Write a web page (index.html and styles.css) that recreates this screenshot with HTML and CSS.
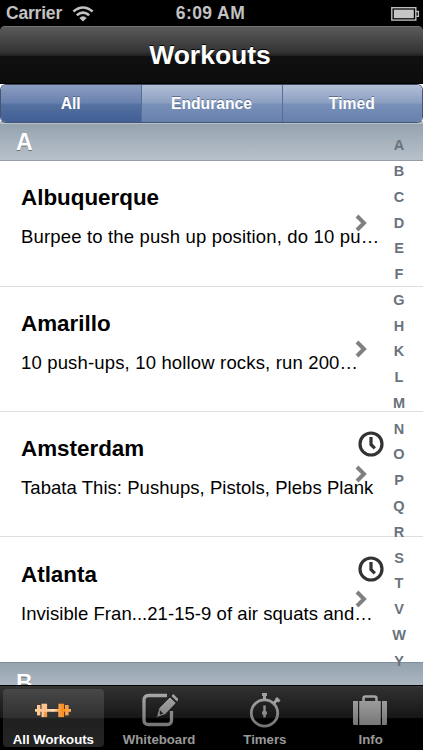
FILE: index.html
```html
<!DOCTYPE html>
<html lang="en">
<head>
<meta charset="utf-8">
<title>Workouts</title>
<link rel="stylesheet" href="styles.css">
</head>
<body>
<div class="phone">
  <header class="status">
    <div class="carrier"><span>Carrier</span>
      <svg class="wifi" width="22" height="16" viewBox="0 0 22 16" fill="none" stroke="#c2c2c2" stroke-width="2.6"><path d="M1.4 5.6Q11-2.6 20.6 5.6M4.8 9.3Q11 3.9 17.2 9.3"/><path d="M7.3 11.9Q11 8.6 14.7 11.9L11 15.6z" fill="#c2c2c2" stroke="none"/></svg>
    </div>
    <div class="clock">6:09 AM</div>
    <svg class="battery" width="29" height="14" viewBox="0 0 29 14"><rect x=".8" y=".7" width="24" height="12.4" fill="none" stroke="#bdbdbd" stroke-width="1.4"/><rect x="2.8" y="2.6" width="20" height="8.6" fill="#c4c4c4"/><path d="M25 4.5h2.4v4.8H25" fill="none" stroke="#bdbdbd" stroke-width="1.3"/></svg>
  </header>
  <h1 class="navbar">Workouts</h1>
  <div class="segments-wrap"><nav class="segments">
    <span class="segment selected">All</span><span class="segment">Endurance</span><span class="segment">Timed</span>
  </nav></div>
  <main class="table">
    <h2 class="section">A</h2>
    <article class="row">
      <h3>Albuquerque</h3><p class="wide">Burpee to the push up position, do 10 pu…</p>
      <svg class="chevron" viewBox="0 0 12 18"><path d="M2 2l7 7-7 7"/></svg>
    </article>
    <article class="row">
      <h3>Amarillo</h3><p class="wide">10 push-ups, 10 hollow rocks, run 200…</p>
      <svg class="chevron" viewBox="0 0 12 18"><path d="M2 2l7 7-7 7"/></svg>
    </article>
    <article class="row">
      <h3>Amsterdam</h3><p>Tabata This: Pushups, Pistols, Plebs Plank</p>
      <svg class="timed" viewBox="0 0 26 26"><circle cx="13" cy="13" r="11"/><path d="M13 6v7.5l3.8 3.8"/></svg>
      <svg class="chevron" viewBox="0 0 12 18"><path d="M2 2l7 7-7 7"/></svg>
    </article>
    <article class="row">
      <h3>Atlanta</h3><p>Invisible Fran...21-15-9 of air squats and…</p>
      <svg class="timed" viewBox="0 0 26 26"><circle cx="13" cy="13" r="11"/><path d="M13 6v7.5l3.8 3.8"/></svg>
      <svg class="chevron" viewBox="0 0 12 18"><path d="M2 2l7 7-7 7"/></svg>
    </article>
    <h2 class="section next">B</h2>
    <div class="index"><span>A</span><span>B</span><span>C</span><span>D</span><span>E</span><span>F</span><span>G</span><span>H</span><span>K</span><span>L</span><span>M</span><span>N</span><span>O</span><span>P</span><span>Q</span><span>R</span><span>S</span><span>T</span><span>V</span><span>W</span><span>Y</span></div>
  </main>
  <footer class="tabs">
    <svg class="defs" width="0" height="0"><defs>
      <linearGradient id="gray" gradientUnits="userSpaceOnUse" x1="0" y1="0" x2="0" y2="36"><stop stop-color="#aaa"/><stop offset="1" stop-color="#727272"/></linearGradient>
      <linearGradient id="orange" gradientUnits="userSpaceOnUse" x1="0" y1="0" x2="38" y2="0"><stop stop-color="#ffd0a0"/><stop offset=".3" stop-color="#ffc089"/><stop offset=".5" stop-color="#ffe3c6"/><stop offset=".62" stop-color="#ffb260"/><stop offset=".75" stop-color="#f98c1d"/><stop offset="1" stop-color="#ffb56c"/></linearGradient>
    </defs></svg>
    <div class="tab active">
      <svg width="38" height="36" viewBox="0 0 38 36" fill="url(#orange)"><path d="M1 17h36v2.800H1z"/><rect x="3" y="13" width="3.400" height="10.400"/><rect x="7.500" y="11.700" width="5.600" height="13.400"/><rect x="24.500" y="11.700" width="5.600" height="13.400"/><rect x="31" y="13" width="3.600" height="10.400"/><path d="M10 20h3v5h-3zM24.500 20h3.500v5h-3.500z" fill="#f39a45"/></svg>
      <span>All Workouts</span></div>
    <div class="tab">
      <svg width="38" height="36" viewBox="0 0 38 36"><path d="M27 3.500H8.500Q4 3.500 4 8v20q0 4.500 4.500 4.500H27q4.500 0 4.500-4.500V19" fill="none" stroke="url(#gray)" stroke-width="3.300"/><path d="M16.500 25.500l2.500-9.500L30 5l6.200 6-11 11.500zM31 4l2.200-2.400 6 5.800-2.200 2.500z" fill="url(#gray)" stroke="#161616" stroke-width=".7"/><path d="M19.800 18l3.600 3.800-3.600 1z" fill="#202020"/></svg>
      <span>Whiteboard</span></div>
    <div class="tab">
      <svg width="38" height="36" viewBox="0 0 38 36" fill="none" stroke="url(#gray)"><circle cx="18.500" cy="21" r="13.200" stroke-width="2.800"/><path d="M16 2.500h5M18.500 2v6M28 11l4-4M30 6l3.500 3.500" stroke="#a2a2a2" stroke-width="3"/><path d="M17.300 13.500h2.400v5.200a2.600 2.600 0 0 1 0 4.600v2.200h-2.400v-2.200a2.600 2.600 0 0 1 0-4.600z" fill="url(#gray)" stroke="none"/></svg>
      <span>Timers</span></div>
    <div class="tab">
      <svg width="38" height="36" viewBox="0 0 38 36" fill="url(#gray)"><path d="M1 9h5v24H2.500Q1 33 1 31.500zM7.200 9h21.600v24H7.200zM30 9h5v22.500q0 1.500-1.500 1.500H30z"/><path d="M11.500 9V6.500q0-2 2-2h9q2 0 2 2V9" fill="none" stroke="url(#gray)" stroke-width="2.600"/></svg>
      <span>Info</span></div>
  </footer>
</div>
</body>
</html>
```
FILE: styles.css
```css
* { box-sizing: border-box; }
body, h1, h2, h3, p { margin: 0; }
body { font-family: "Liberation Sans", Arial, sans-serif; background: #000; overflow: hidden; }
.phone { width: 423px; height: 750px; display: flex; flex-direction: column; background: #000; }
.status { flex: 0 0 26px; display: grid; grid-template-columns: 1fr auto 1fr; align-items: center; padding: 1px 3px 0 6px; color: #c2c2c2; font-weight: bold; font-size: 17.500px; line-height: 25px; }
.carrier { display: flex; align-items: center; gap: 10px; letter-spacing: -.2px; }
.clock { letter-spacing: .4px; margin-right: 5px; }
.battery { justify-self: end; }
.navbar { flex: 0 0 58px; border-top: 1px solid #737373; border-radius: 5px 5px 0 0; border-bottom: 1px solid #000; padding-right: 3px; background: linear-gradient(#5a5a5a 0, #343434 44%, #222 51%, #101010 52%, #0d0d0d 100%); color: #fff; font-size: 26.500px; line-height: 56px; text-align: center; text-shadow: 0 -1px #000; }
.segments-wrap { flex: 0 0 39px; background: linear-gradient(#fff 37px, #a8b3bd 38px); }
.segments { height: 39px; display: grid; grid-template-columns: repeat(3, 1fr); border: 1px solid #465574; border-top-color: #3e465a; border-radius: 6px; overflow: hidden; }
.segment { background: linear-gradient(#b1bed7, #8c9fc1 48%, #7990b8 52%, #6681ad); color: #fff; font-weight: bold; font-size: 15.700px; line-height: 37px; padding-right: 1px; text-align: center; text-shadow: 0 -1px rgba(45,60,90,.55); border-left: 1px solid #576e98; }
.segment.selected { background: linear-gradient(#8c9dc1, #6881ae 48%, #54709f 54%, #405f95); border-left: 0; }
.table { flex: 1; min-height: 0; position: relative; overflow: hidden; background: #fff; }
.section { height: 38px; padding-left: 16px; background: linear-gradient(#95a3af, #b8c1cb); border-top: 1px solid #b8c1ca; border-bottom: 1px solid #979daa; color: #fff; font-size: 23px; line-height: 36px; text-shadow: 0 1px rgba(0,0,0,.45); }
.section.next { border-top: 1px solid #818d98; line-height: 41px; }
.row { height: 125.300px; padding: 24.400px 0 0 21px; border-bottom: 1px solid #dedede; position: relative; white-space: nowrap; }
.row:first-of-type { height: 125.600px; }
.row:nth-of-type(4) { height: 124.400px; border-bottom: 0; }
.row h3 { font-size: 22.400px; line-height: 26px; }
.row p { margin-top: 14px; font-size: 18.500px; line-height: 24px; letter-spacing: .05px; }
.row .wide { letter-spacing: .16px; }
.chevron { position: absolute; left: 355px; top: 53px; width: 12px; height: 18px; fill: none; stroke: #808080; stroke-width: 4; }
.timed { position: absolute; left: 358px; top: 19px; width: 26px; height: 26px; fill: none; stroke: #333; stroke-width: 3.200; }
.index { position: absolute; top: 10.300px; right: 9px; width: 30px; display: grid; grid-auto-rows: 25.770px; color: #6a737d; font-weight: bold; font-size: 14.500px; line-height: 25.770px; text-align: center; }
.tabs { flex: 0 0 65px; display: grid; grid-template-columns: repeat(4, 1fr); border-top: 1px solid #000; background: linear-gradient(#3a3a3a 0, #303030 2px, #161616 50%, #000 51%); padding-top: 1px; }
.defs { position: absolute; }
.tab { margin: 2px 2px 3px 3px; border-radius: 4px; display: flex; flex-direction: column; align-items: center; color: #999; font-weight: bold; font-size: 13.200px; line-height: 15px; padding-top: 3px; white-space: nowrap; }
.tab span { margin-top: 4px; }
.tab.active { background: linear-gradient(#474747, #303030 50%, #202020 51%, #242424); color: #fff; }
```
